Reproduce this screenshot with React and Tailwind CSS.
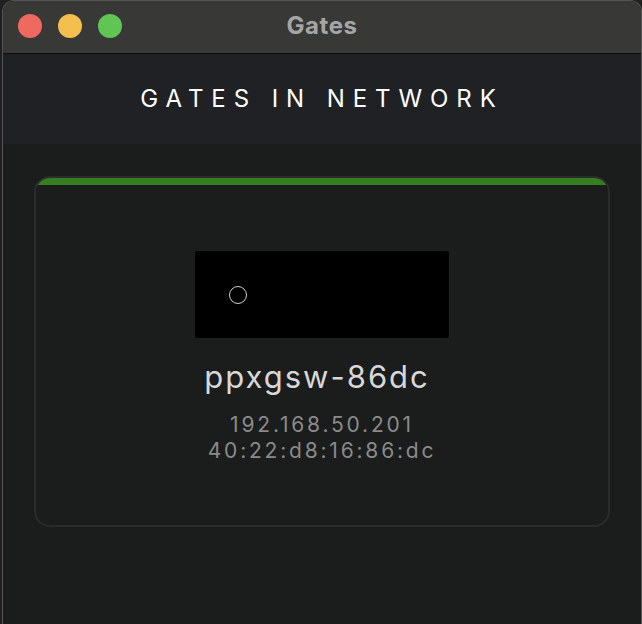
// App.jsx

import React from 'react';

const gate = {
  name: 'ppxgsw-86dc',
  ip: '192.168.50.201',
  mac: '40:22:d8:16:86:dc',
};

const font = { fontFamily: 'Inter, "Noto Sans", sans-serif' };

// Window title bar with the three traffic lights
const TitleBar = () => (
  <div className="relative h-[53px] shrink-0 bg-[#383837] border-b border-[#0e0e0e] flex items-center justify-center">
    <div className="absolute left-[15px] top-[13px] flex gap-[16px]">
      <span className="w-[24px] h-[24px] rounded-full bg-[#ee6a5e]" />
      <span className="w-[24px] h-[24px] rounded-full bg-[#f5bf4f]" />
      <span className="w-[24px] h-[24px] rounded-full bg-[#61c554]" />
    </div>
    <span className="text-[24px] font-bold text-[#a5a5a5] leading-none tracking-[0.6px] -mt-[3px]">Gates</span>
  </div>
);

const GateCard = ({ item }) => (
  <div className="rounded-[16px] border-2 border-[#2a2b2b] overflow-hidden bg-[#1b1c1c]">
    <div className="h-[7px] bg-[#377d22]" />
    <div className="flex flex-col items-center pt-[65px] pb-[61px]">
      <div className="w-[256px] h-[89px] bg-black rounded-[3px] border border-[#1f1f1f] flex items-center pl-[34px]">
        <span className="w-[18px] h-[18px] rounded-full border border-[#cfcfcf]" />
      </div>
      <div className="mt-[21px] text-[31px] leading-[34px] text-[#d8d8d8] tracking-[2px] pr-[10px]">
        {item.name}
      </div>
      <div className="mt-[18px] flex flex-col items-center text-[21px] leading-[26px] text-[#8a8a8a] tracking-[2.8px]">
        <span>{item.ip}</span>
        <span>{item.mac}</span>
      </div>
    </div>
  </div>
);

export default function App() {
  return (
    <div className="w-[642px] h-[624px] bg-[#202020] overflow-hidden" style={font}>
      <div className="ml-[2px] w-[640px] h-[624px] rounded-t-[12px] border border-b-0 border-[#555555] overflow-hidden flex flex-col">
        <TitleBar />

        {/* Header */}
        <div className="h-[90px] shrink-0 bg-[#202124] flex items-center justify-center">
          <h1 className="text-[24px] text-white tracking-[0.33em] leading-none">
            GATES IN NETWORK
          </h1>
        </div>

        {/* Gate list */}
        <div className="flex-1 bg-[#1b1c1c] pt-[32px] pl-[31px] pr-[31px]">
          <GateCard item={gate} />
        </div>
      </div>
    </div>
  );
}
